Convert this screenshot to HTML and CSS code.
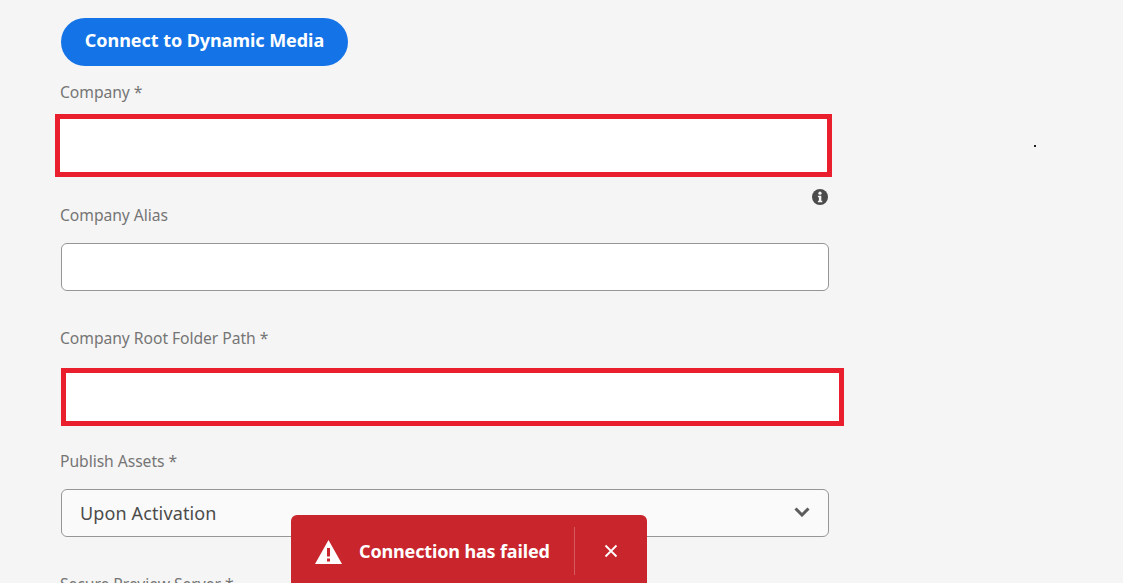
FILE: index.html
```html
<!DOCTYPE html>
<html lang="en">
<head>
<meta charset="utf-8">
<title>Dynamic Media Configuration</title>
<link rel="stylesheet" href="styles.css">
</head>
<body>
<main class="form">
  <button class="connect" type="button">Connect to Dynamic Media</button>

  <div class="field field-company">
    <label class="label">Company *</label>
    <div class="flagged flagged-company"></div>
  </div>

  <div class="field field-alias">
    <svg class="info" viewBox="0 0 16 16" aria-hidden="true">
      <circle cx="8" cy="8" r="8" fill="#4b4b4b"/>
      <circle cx="8" cy="4.2" r="1.6" fill="#f5f5f5"/>
      <path d="M5.900 6.700h3.400v5h1v1.600H5.900v-1.600h1v-3.400h-1z" fill="#f5f5f5"/>
    </svg>
    <label class="label">Company Alias</label>
    <div class="input"></div>
  </div>

  <div class="field field-root">
    <label class="label">Company Root Folder Path *</label>
    <div class="flagged flagged-root"></div>
  </div>

  <div class="field field-publish">
    <label class="label">Publish Assets *</label>
    <div class="select">
      <span>Upon Activation</span>
      <svg class="chevron" viewBox="0 0 16 10" aria-hidden="true">
        <path d="M1.500 1.500 8 8l6.500-6.500" fill="none" stroke="#5c5c5c" stroke-width="3"/>
      </svg>
    </div>
  </div>

  <div class="field field-preview">
    <label class="label">Secure Preview Server *</label>
  </div>
</main>

<span class="speck"></span>

<div class="toast" role="alert">
  <svg class="toast-icon" viewBox="0 0 27 24" aria-hidden="true">
    <path fill-rule="evenodd" d="M13.500 0 27 24H0ZM12 8h3v8.500h-3ZM12 18.500h3v3h-3Z" fill="#fff"/>
  </svg>
  <span class="toast-text">Connection has failed</span>
  <span class="toast-divider"></span>
  <svg class="toast-close" viewBox="0 0 14 14" aria-hidden="true">
    <path d="M1.500 1.500l11 11M12.500 1.500l-11 11" stroke="#fff" stroke-width="1.800" fill="none"/>
  </svg>
</div>
</body>
</html>
```
FILE: styles.css
```css
* { box-sizing: border-box; }
html, body { height: 100%; }
body {
  margin: 0;
  background: #f5f5f5;
  font-family: "Noto Sans", "Open Sans", sans-serif;
  overflow: hidden;
  position: relative;
}
.form {
  display: flex;
  flex-direction: column;
  align-items: flex-start;
  width: 768px;
  margin-left: 61px;
  padding-top: 18px;
}
.connect {
  height: 48px;
  width: 287px;
  padding: 0 0 4px;
  border: 0;
  border-radius: 24px;
  background: #1473e6;
  color: #fff;
  font-family: inherit;
  font-size: 18px;
  font-weight: 700;
  letter-spacing: -0.05px;
}
.field { position: relative; width: 100%; }
.field-company { margin-top: 14px; }
.field-alias { margin-top: 26px; }
.field-root { margin-top: 35px; }
.field-publish { margin-top: 23px; }
.field-preview { margin-top: 35px; }
.label {
  display: block;
  height: 24px;
  margin-left: -1px;
  color: #757575;
  font-size: 15.700px;
  line-height: 24px;
  letter-spacing: -0.06px;
}
.flagged {
  background: #fff;
  border: 5px solid #e91f2d;
}
.flagged-company {
  width: 777px;
  height: 63px;
  margin: 10px 0 0 -6px;
}
.flagged-root {
  width: 783px;
  height: 58px;
  margin-top: 18px;
}
.input, .select {
  height: 48px;
  margin-top: 16px;
  border: 1px solid #969696;
  border-radius: 6px;
}
.input { background: #fff; }
.select {
  display: flex;
  align-items: center;
  justify-content: space-between;
  padding: 0 18px;
  background: #fafafa;
  color: #4b4b4b;
  font-size: 18px;
  letter-spacing: 0.13px;
}
.chevron { width: 16px; height: 10px; margin-bottom: 2px; }
.info {
  position: absolute;
  top: -14px;
  right: 1px;
  width: 16px;
  height: 16px;
}
.speck {
  position: absolute;
  left: 1034px;
  top: 145px;
  width: 2px;
  height: 2px;
  background: #222;
}
.toast {
  position: absolute;
  left: 291px;
  top: 515px;
  width: 356px;
  height: 80px;
  display: flex;
  align-items: flex-start;
  border-radius: 6px 6px 0 0;
  background: #c9252d;
  color: #fff;
}
.toast-icon { width: 27px; height: 24px; margin: 25px 0 0 24px; }
.toast-text {
  margin: 24px 0 0 17px;
  width: 215px;
  font-size: 18px;
  font-weight: 700;
  line-height: 24px;
  letter-spacing: -0.15px;
  white-space: nowrap;
}
.toast-divider {
  width: 1px;
  height: 48px;
  margin: 12px 0 0 0;
  background: rgba(255, 255, 255, 0.25);
}
.toast-close { width: 14px; height: 14px; margin: 29px 0 0 29px; }
```
